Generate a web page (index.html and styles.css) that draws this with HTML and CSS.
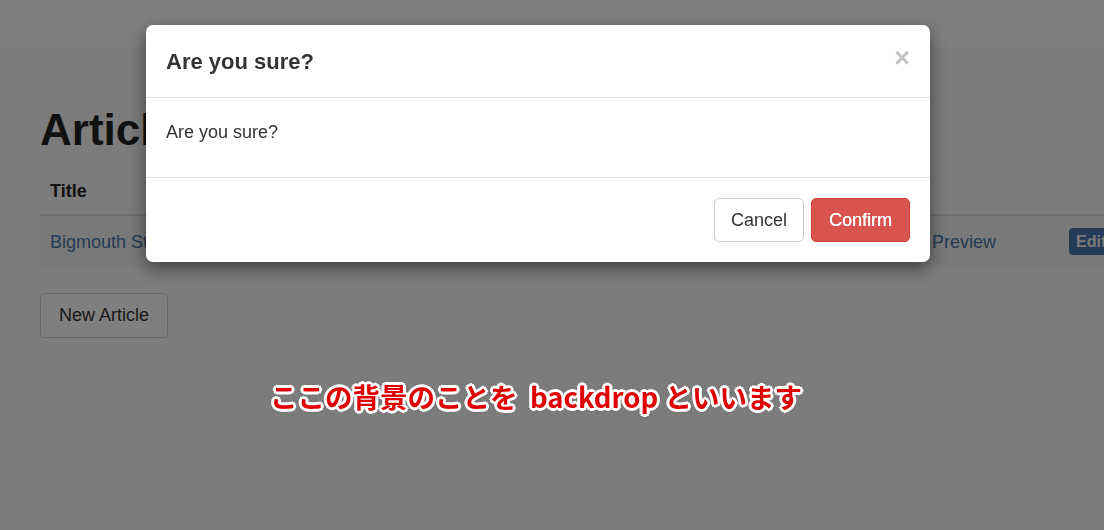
FILE: index.html
```html
<!DOCTYPE html>
<html>
<head>
  <title>Articles</title>
  <link rel="stylesheet" href="styles.css">
</head>
<body>
  <nav class="navbar"></nav>

  <div class="container">
    <h1>Articles</h1>

    <table class="articles">
      <thead>
        <tr>
          <th class="col-title">Title</th>
          <th class="col-body">Body</th>
          <th class="col-preview"></th>
          <th class="col-edit"></th>
        </tr>
      </thead>
      <tbody>
        <tr>
          <td><a href="#">Bigmouth Strikes Again</a></td>
          <td>Sweetness, sweetness I was only joking</td>
          <td><a href="#">Preview</a></td>
          <td><a class="btn-edit" href="#">Edit</a></td>
        </tr>
      </tbody>
    </table>

    <button class="btn-default">New Article</button>
  </div>

  <div class="backdrop"></div>

  <div class="modal">
    <div class="modal-header">
      <h4>Are you sure?</h4>
      <span class="close">&times;</span>
    </div>
    <div class="modal-body">
      <p>Are you sure?</p>
    </div>
    <div class="modal-footer">
      <button class="btn-cancel">Cancel</button>
      <button class="btn-confirm">Confirm</button>
    </div>
  </div>

  <div class="note">ここの背景のことを&nbsp; backdrop といいます</div>
</body>
</html>
```

FILE: styles.css
```css
body {
  font-family: 'Liberation Sans', Arial, sans-serif;
  font-size: 18px;
  color: #333;
  background: #f9f9f9;
  margin: 0;
  overflow: hidden;
}
.navbar {
  height: 48px;
  background-color: #fff;
}
.container {
  padding: 0 40px;
}
h1 {
  font-size: 44px;
  font-weight: bold;
  color: #222;
  margin: 58px 0 17px;
  line-height: 1.1;
}
.articles {
  border-collapse: collapse;
  width: 1119px;
  table-layout: fixed;
}
.articles th {
  text-align: left;
  font-weight: bold;
  color: #222;
  padding: 10px 10px 12px;
  border-bottom: 2px solid #ddd;
}
.articles td {
  padding: 12px 10px;
  background-color: #f3f3f3;
  line-height: 26px;
  white-space: nowrap;
  overflow: hidden;
}
.col-title { width: 380px; }
.col-body { width: 462px; }
.col-preview { width: 117px; }
.col-edit { width: 80px; }
.articles a {
  color: #4a76a8;
  text-decoration: none;
}
.articles .btn-edit {
  display: inline-block;
  background-color: #4a78b0;
  color: #f2f2f2;
  font-size: 16px;
  font-weight: bold;
  padding: 1px 7px;
  border-radius: 4px;
  line-height: 25px;
}
.btn-default {
  margin-top: 26px;
  font-family: inherit;
  font-size: 18px;
  color: #333;
  background: #fff;
  border: 1px solid #ccc;
  border-radius: 5px;
  height: 45px;
  width: 128px;
  padding: 0;
}
.backdrop {
  position: fixed;
  inset: 0;
  background-color: rgba(0,0,0,0.5);
}
.modal {
  position: fixed;
  left: 146px;
  top: 25px;
  width: 784px;
  background: #fff;
  border-radius: 7px;
  box-shadow: 0 6px 18px rgba(0,0,0,0.5);
}
.modal-header {
  height: 72px;
  display: flex;
  align-items: center;
  justify-content: space-between;
  padding: 0 19px 0 20px;
  border-bottom: 1px solid #e5e5e5;
}
.modal-header h4 {
  margin: 0;
  font-size: 22px;
  font-weight: bold;
  color: #333;
  padding-top: 2px;
}
.close {
  font-size: 27px;
  font-weight: bold;
  color: #c4c4c4;
  line-height: 1;
  margin-top: -6px;
  margin-right: 1px;
}
.modal-body {
  height: 79px;
  padding: 0 20px;
  border-bottom: 1px solid #e5e5e5;
}
.modal-body p {
  margin: 0;
  padding-top: 21px;
  line-height: 26px;
  font-size: 18px;
}
.modal-footer {
  display: flex;
  justify-content: flex-end;
  gap: 7px;
  padding: 20px;
}
.modal-footer button {
  font-family: inherit;
  font-size: 18px;
  height: 44px;
  border-radius: 5px;
  padding: 0;
}
.btn-cancel {
  width: 90px;
  background: #fff;
  color: #333;
  border: 1px solid #ccc;
}
.btn-confirm {
  width: 99px;
  background: #d9534f;
  color: #fff;
  border: 1px solid #d43f3a;
  text-shadow: 0.3px 0 0 #fff;
}
.note {
  position: absolute;
  left: 270px;
  top: 376px;
  font-family: 'Noto Sans CJK JP', 'Noto Sans', sans-serif;
  font-weight: bold;
  font-size: 27.5px;
  line-height: 40px;
  color: #e10000;
  white-space: nowrap;
  text-shadow:
    2px 0 0 #fff, -2px 0 0 #fff, 0 2px 0 #fff, 0 -2px 0 #fff,
    2px 2px 0 #fff, -2px 2px 0 #fff, 2px -2px 0 #fff, -2px -2px 0 #fff,
    3px 0 0 #fff, -3px 0 0 #fff, 0 3px 0 #fff, 0 -3px 0 #fff,
    0 0 5px rgba(0,0,0,0.4);
}
```
